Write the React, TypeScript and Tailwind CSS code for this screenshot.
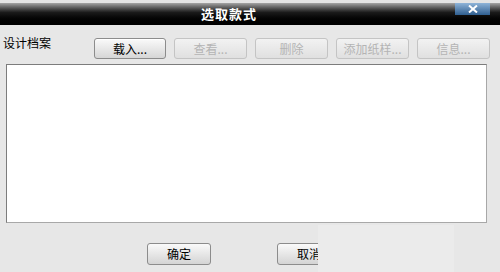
const cjk = { fontFamily: '"Noto Sans CJK SC", "Noto Sans", sans-serif' };

const Btn = ({ label, disabled = false, w }: { label: string; disabled?: boolean; w: string }) => (
  <div
    className={`${w} h-[21px] rounded-[3px] border flex items-center justify-center text-[12px] leading-none ${
      disabled
        ? 'border-[#c4c4c4] text-[#b4b4b4] bg-gradient-to-b from-[#f2f2f2] to-[#e0e0e0]'
        : 'border-[#8c8c8c] text-black bg-gradient-to-b from-[#fafafa] to-[#d6d6d6] shadow-[inset_0_1px_0_#fff]'
    }`}
  >
    {label}
  </div>
);

export default function App() {
  return (
    <div className="relative w-[500px] h-[272px] overflow-hidden bg-[#e7e7e7]" style={cjk}>
      {/* title bar */}
      <div className="relative h-[25px] bg-gradient-to-b from-[#d8d8d8] via-[#1a1a1a] to-black flex items-center justify-center">
        <div className="absolute top-0 left-0 right-0 h-[3px] bg-[#e4e4e4]" />
        <span className="relative top-[1px] mr-[42px] text-white font-bold text-[13px] tracking-[1px]">选取款式</span>
        <div className="absolute left-[455px] top-[3px] w-[35px] h-[12px] bg-gradient-to-b from-[#8fb4d8] to-[#2f5f90] flex items-center justify-center">
          <svg width="10" height="8" viewBox="0 0 10 8">
            <path d="M1 0.5 L9 7.5 M9 0.5 L1 7.5" stroke="white" strokeWidth="2" />
          </svg>
        </div>
      </div>

      {/* toolbar */}
      <div className="flex items-start pt-[13px] pl-[3px]">
        <div className="w-[91px] -mt-[3px] text-[12px] leading-[16px] text-black">设计档案</div>
        <div className="flex gap-[8px]">
          <Btn label="载入..." w="w-[72px]" />
          <Btn label="查看..." w="w-[73px]" disabled />
          <Btn label="删除" w="w-[73px]" disabled />
          <Btn label="添加纸样..." w="w-[73px]" disabled />
          <Btn label="信息..." w="w-[73px]" disabled />
        </div>
      </div>

      {/* list */}
      <div className="ml-[6px] mt-[5px] w-[481px] h-[159px] bg-white border border-[#a8a8a8] border-l-[#7c7c7c] border-t-[#7c7c7c]" />

      {/* bottom buttons */}
      <div className="flex mt-[20px] pl-[147px] gap-[66px]">
        <div className="w-[64px] h-[22px] rounded-[3px] border border-[#8c8c8c] bg-gradient-to-b from-[#fafafa] to-[#d4d4d4] flex items-center justify-center text-[12px] leading-none">确定</div>
        <div className="w-[64px] h-[22px] rounded-[3px] border border-[#8c8c8c] bg-gradient-to-b from-[#fafafa] to-[#d4d4d4] flex items-center justify-center text-[12px] leading-none">取消</div>
      </div>

      {/* patched-over area */}
      <div className="absolute left-[318px] top-[225px] w-[136px] h-[47px] bg-[#ebebeb]" />
    </div>
  );
}
